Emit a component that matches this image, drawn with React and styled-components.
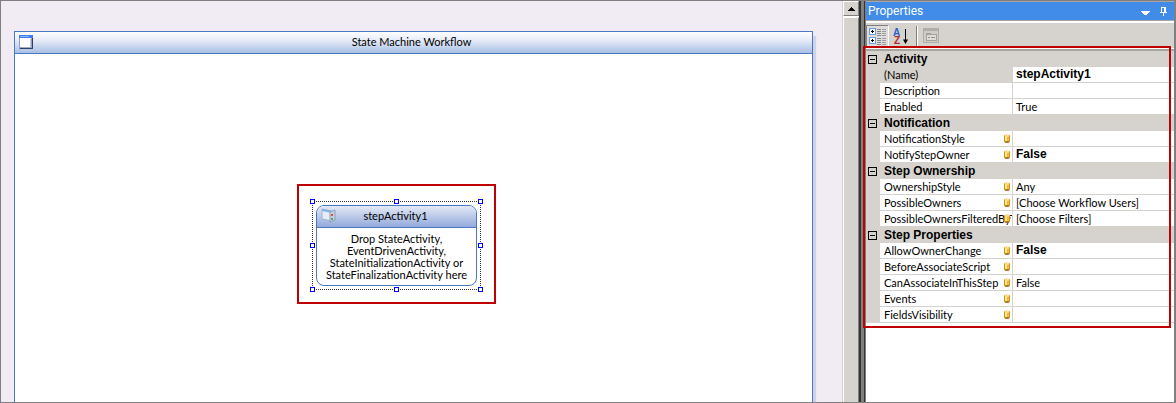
import React from 'react'
import styled, { createGlobalStyle, css } from 'styled-components'

const groups = [
    {
        title: 'Activity',
        rows: [
            { name: '(Name)', value: 'stepActivity1', bold: true, selected: true },
            { name: 'Description' },
            { name: 'Enabled', value: 'True' },
        ],
    },
    {
        title: 'Notification',
        rows: [
            { name: 'NotificationStyle', bindable: true },
            { name: 'NotifyStepOwner', value: 'False', bold: true, bindable: true },
        ],
    },
    {
        title: 'Step Ownership',
        rows: [
            { name: 'OwnershipStyle', value: 'Any', bindable: true },
            { name: 'PossibleOwners', value: '[Choose Workflow Users]', bindable: true },
            { name: 'PossibleOwnersFilteredByT', value: '[Choose Filters]', bindable: true },
        ],
    },
    {
        title: 'Step Properties',
        rows: [
            { name: 'AllowOwnerChange', value: 'False', bold: true, bindable: true },
            { name: 'BeforeAssociateScript', bindable: true },
            { name: 'CanAssociateInThisStep', value: 'False', bindable: true },
            { name: 'Events', bindable: true },
            { name: 'FieldsVisibility', bindable: true },
        ],
    },
]

const handles = [
    ['0%', '0%'], ['50%', '0%'], ['100%', '0%'],
    ['0%', '50%'], ['100%', '50%'],
    ['0%', '100%'], ['50%', '100%'], ['100%', '100%'],
]

const WindowIcon = () => (
    <svg width="14" height="14" shapeRendering="crispEdges" aria-hidden="true">
        <rect width="14" height="14" fill="#8fa3c8" />
        <rect width="14" height="3" fill="#3f7bf0" />
        <rect x="1" y="1" width="9" height="1" fill="#8fb4ff" />
        <rect x="1" y="3" width="11" height="9" fill="#fff" />
        <rect x="11" y="4" width="1" height="8" fill="#c9cdda" />
        <rect x="2" y="12" width="10" height="1" fill="#a9adbb" />
        <rect x="13" y="3" width="1" height="11" fill="#2f3f68" />
        <rect x="1" y="13" width="13" height="1" fill="#2f3f68" />
    </svg>
)

const StepIcon = () => (
    <svg width="16" height="16" aria-hidden="true">
        <path d="M1 1L11 3V13L1 11Z" fill="#e4edf8" stroke="#a4b3cd" />
        <path d="M1 1L11 3V5L1 3Z" fill="#7fb2ea" />
        <path d="M9 4L14 2V12L9 14Z" fill="#c3d0e2" stroke="#8fa0bb" />
        <rect x="10" y="6" width="2" height="2" fill="#e04a3c" />
        <rect x="10" y="10" width="2" height="2" fill="#4fae56" />
    </svg>
)

const CategoryIcon = () => (
    <svg width="18" height="17" shapeRendering="crispEdges" aria-hidden="true">
        {[0, 9].map(y => (
            <g key={y}>
                <rect x="0" y={y} width="7" height="7" fill="#6a9ce2" />
                <rect x="1" y={y + 1} width="5" height="5" fill="#fff" />
                <rect x="2" y={y + 3} width="3" height="1" fill="#000" />
                <rect x="3" y={y + 2} width="1" height="3" fill="#000" />
                {[1, 3, 5, 7].map(l => (
                    <g key={l}>
                        <rect x="8" y={y + l} width="4" height="1" fill="#83878e" />
                        <rect x="13" y={y + l} width="4" height="1" fill="#9a9ca0" />
                    </g>
                ))}
            </g>
        ))}
    </svg>
)

const SortIcon = () => (
    <svg width="16" height="17" overflow="visible" aria-hidden="true">
        <text x="0" y="8" fontSize="10" fontWeight="bold" fill="#2c60c8">A</text>
        <text x="1" y="16" fontSize="10" fontWeight="bold" fill="#b02c2c">Z</text>
        <path d="M12.5 1V15" stroke="#000" />
        <path d="M10 11.5H15L12.5 16Z" fill="#000" />
    </svg>
)

const PagesIcon = () => (
    <svg width="16" height="16" shapeRendering="crispEdges" aria-hidden="true">
        <rect x="0" y="0" width="16" height="15" fill="#b0aeab" />
        <rect x="1" y="3" width="14" height="11" fill="#cfccc7" />
        <rect x="3" y="5" width="5" height="2" fill="#a5a29e" />
        <rect x="3" y="6" width="11" height="7" fill="#a5a29e" />
        <rect x="4" y="7" width="9" height="5" fill="#dedbd6" />
        <rect x="5" y="9" width="2" height="1" fill="#96938f" />
        <rect x="8" y="9" width="4" height="1" fill="#96938f" />
    </svg>
)

const BindIcon = () => (
    <svg width="7" height="9" aria-hidden="true">
        <rect x="0" y="1" width="6" height="7" fill="#d8961c" />
        <rect x="1" y="1" width="2" height="7" fill="#ffe48a" />
        <rect x="3" y="1" width="2" height="7" fill="#f2bd3c" />
        <ellipse cx="3" cy="1.5" rx="2.5" ry="1.2" fill="#f8dc96" />
        <ellipse cx="3" cy="8" rx="2.5" ry="1" fill="#a87420" />
    </svg>
)

const App = () => (
    <Frame>
        <GlobalStyle />

        <Surface>
            <Designer>
                <DesignerHeader>
                    <WindowIcon />
                    <h1>State Machine Workflow</h1>
                </DesignerHeader>

                <Canvas>
                    <Callout>
                        <Selection>
                            <Activity>
                                <ActivityHeader>
                                    <StepIcon />
                                    <h2>stepActivity1</h2>
                                </ActivityHeader>
                                <p>
                                    Drop StateActivity,<br />
                                    EventDrivenActivity,<br />
                                    StateInitializationActivity or<br />
                                    StateFinalizationActivity here
                                </p>
                            </Activity>
                            <HandleLayer>
                                {handles.map(([x, y]) => <Handle key={x + y} $x={x} $y={y} />)}
                            </HandleLayer>
                        </Selection>
                    </Callout>
                </Canvas>
            </Designer>
        </Surface>

        <ScrollBar>
            <ScrollButton aria-label="Scroll up">
                <svg width="7" height="4" shapeRendering="crispEdges">
                    <path d="M3 0H4V1H5V2H6V3H7V4H0V3H1V2H2V1H3Z" />
                </svg>
            </ScrollButton>
            <Thumb />
        </ScrollBar>

        <Splitter />

        <Panel>
            <TitleBar>
                <h2>Properties</h2>
                <TitleButton aria-label="Window position">
                    <svg width="9" height="9" shapeRendering="crispEdges">
                        <path d="M0 4H9V5H8V6H7V7H6V8H3V7H2V6H1V5H0Z" fill="#fff" />
                    </svg>
                </TitleButton>
                <TitleButton aria-label="Auto hide">
                    <svg width="7" height="9" shapeRendering="crispEdges">
                        <path d="M1 0H6V5H7V6H4V9H3V6H0V5H1ZM2 1V5H4V1Z" fill="#fff" fillRule="evenodd" />
                    </svg>
                </TitleButton>
            </TitleBar>

            <ToolBar>
                <ToolButton $pressed aria-label="Categorized"><CategoryIcon /></ToolButton>
                <ToolButton aria-label="Alphabetical"><SortIcon /></ToolButton>
                <Separator />
                <ToolButton aria-label="Property pages"><PagesIcon /></ToolButton>
            </ToolBar>

            <GridArea>
                <Grid>
                    <colgroup>
                        <col width="14" />
                        <col width="133" />
                        <col />
                    </colgroup>
                    {groups.map(group => (
                        <tbody key={group.title}>
                            <tr>
                                <Gutter>
                                    <Toggle aria-label={`Collapse ${group.title}`} />
                                </Gutter>
                                <Category colSpan="2" scope="rowgroup">{group.title}</Category>
                            </tr>
                            {group.rows.map(row => (
                                <tr key={row.name}>
                                    <Gutter />
                                    <Name scope="row" $selected={row.selected}>
                                        {row.name}
                                        {row.bindable && <Bind><BindIcon /></Bind>}
                                    </Name>
                                    <Value $bold={row.bold}>{row.value}</Value>
                                </tr>
                            ))}
                        </tbody>
                    ))}
                </Grid>
            </GridArea>

            <PanelOutline />
        </Panel>
    </Frame>
)

export default App

const GlobalStyle = createGlobalStyle`
* {
    box-sizing: border-box;
}

body {
    margin: 0;
    font-family: Lato, "Liberation Sans", sans-serif;
    font-size: 11px;
    color: #000;
}

h1, h2, p {
    margin: 0;
    font-size: 11px;
    font-weight: normal;
}

button {
    padding: 0;
    border: 0;
    background: none;
}

svg {
    display: block;
}
`

const Frame = styled.div`
display: flex;
height: 100vh;
border: 1px solid #808080;
overflow: hidden;
`

const Surface = styled.main`
flex: 1;
min-width: 0;
display: flex;
padding: 30px 29px 0 13px;
background: #f1ecf3;
border-right: 1px solid #d6d3ce;
overflow: hidden;
`

const Designer = styled.section`
flex: 1;
display: flex;
flex-direction: column;
border: 1px solid #4a78c4;
border-bottom: 0;
background: #fff;
box-shadow: 3px 5px 1px #cfd3e8;
`

const DesignerHeader = styled.header`
display: flex;
align-items: center;
height: 22px;
padding: 0 22px 2px 4px;
border-bottom: 1px solid #4a78c4;
background: linear-gradient(#fff, #e6ebf8 40%, #a9bfe4);

h1 {
    flex: 1;
    text-align: center;
}
`

const Canvas = styled.div`
flex: 1;
position: relative;
`

// red frame around the selected activity
const Callout = styled.div`
position: absolute;
left: 282px;
top: 130px;
padding: 15px 13px 12px;
border: 2px solid #c00000;
`

const Selection = styled.div`
position: relative;
padding: 3px;
border: 1px dotted #333;
`

// ends on the dotted line, so every handle is centred on it
const HandleLayer = styled.div`
position: absolute;
inset: -1px 0 0 -1px;
`

const Handle = styled.span`
position: absolute;
left: ${props => props.$x};
top: ${props => props.$y};
width: 5px;
height: 5px;
margin: -2px;
border: 1px solid #0000ff;
background: #fff;
`

const Activity = styled.article`
width: 161px;
border: 1px solid #4a78c4;
border-radius: 8px;
background: #fff;
overflow: hidden;

p {
    padding: 5px 0 4px;
    line-height: 12px;
    text-align: center;
    white-space: nowrap;
}
`

const ActivityHeader = styled.header`
display: flex;
align-items: center;
height: 22px;
padding: 0 22px 2px 4px;
border-bottom: 1px solid #4a78c4;
background: linear-gradient(#e4e9f6, #93aadb);

h2 {
    flex: 1;
    text-align: center;
}
`

const raised = css`
border: 1px solid;
border-color: #fff #808080 #808080 #fff;
background: #d6d3ce;
`

const ScrollBar = styled.div`
display: flex;
flex-direction: column;
width: 16px;
`

const ScrollButton = styled.button`
${raised}
display: flex;
align-items: center;
justify-content: center;
height: 15px;
`

const Thumb = styled.div`
${raised}
flex: 1;
margin-top: 1px;
border-bottom: 0;
`

const Splitter = styled.div`
width: 6px;
border-left: 2px solid #333;
border-right: 1px solid #333;
background: #808080;
`

const Panel = styled.aside`
position: relative;
display: flex;
flex-direction: column;
width: 310px;
border: solid #808080;
border-width: 0 1px;
background: #d6d3ce;
`

const TitleBar = styled.header`
display: flex;
align-items: center;
height: 20px;
padding: 0 4px 0 2px;
border: solid #a9a59f;
border-width: 1px 0;
background: #418ce8;
color: #fff;

h2 {
    flex: 1;
    font-family: Roboto, sans-serif;
    font-size: 12px;
}
`

const TitleButton = styled.button`
display: flex;
justify-content: center;
width: 13px;
margin-left: 5px;
`

const ToolBar = styled.div`
display: flex;
align-items: center;
height: 28px;
padding: 1px 0 0;
border-top: 2px solid #fff;
border-bottom: 1px solid #fff;
`

const ToolButton = styled.button`
display: flex;
align-items: center;
justify-content: center;
width: 23px;
height: 22px;
border: 1px solid transparent;

${props => props.$pressed && css`
border-color: #808080 #fff #fff #808080;
background: #dfddd9;
`}
`

const Separator = styled.span`
width: 2px;
height: 20px;
margin: 0 1px 0 4px;
border-left: 1px solid #808080;
border-right: 1px solid #fff;
`

const GridArea = styled.div`
flex: 1;
border-top: 2px solid #a9a59f;
background: #fff;
`

const Grid = styled.table`
width: 100%;
table-layout: fixed;
border-spacing: 0;

td, th {
    height: 16px;
    padding: 0;
    line-height: 15px;
    text-align: left;
    white-space: nowrap;
    overflow: hidden;
}
`

const Gutter = styled.td`
background: #d6d3ce;
`

const Toggle = styled.button`
display: flex;
align-items: center;
justify-content: center;
width: 9px;
height: 9px;
margin-left: 2px;
border: 1px solid #000;

&::before {
    content: '';
    width: 5px;
    height: 1px;
    background: #000;
}
`

const Category = styled.th`
background: #d6d3ce;
font-family: "Liberation Sans", Arial, sans-serif;
font-size: 12px;
text-indent: 4px;
`

const Name = styled.th`
position: relative;
border-right: 1px solid #d6d3ce;
border-bottom: 1px solid #d6d3ce;
background: ${props => props.$selected ? '#d6d3ce' : '#fff'};
font-weight: normal;
text-indent: 4px;
`

const Bind = styled.span`
position: absolute;
right: 1px;
top: 3px;
text-indent: 0;
`

const Value = styled.td`
border-bottom: 1px solid #d6d3ce;
text-indent: 3px;

${props => props.$bold && css`
font-family: "Liberation Sans", Arial, sans-serif;
font-size: 12px;
font-weight: bold;
`}
`

// red frame around the property list
const PanelOutline = styled.div`
position: absolute;
left: -3px;
right: 3px;
top: 45px;
height: 282px;
border: 2px solid #c00000;
pointer-events: none;
`
